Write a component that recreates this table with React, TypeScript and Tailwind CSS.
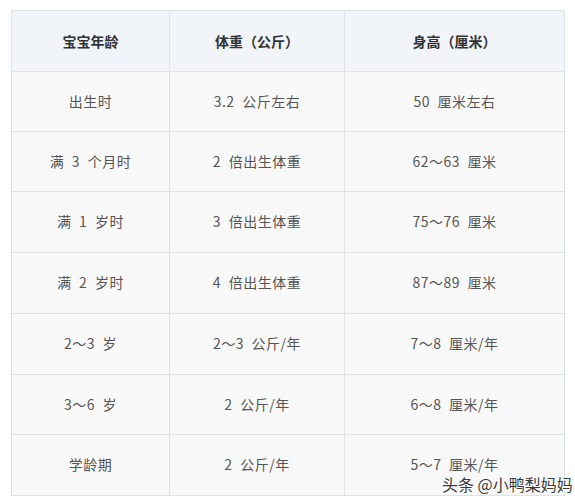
import React from "react";

const rows: { h: string; a: string; b: string; c: string }[] = [
  { h: "h-[60px]", a: "出生时", b: "3.2 公斤左右", c: "50 厘米左右" },
  { h: "h-[60px]", a: "满 3 个月时", b: "2 倍出生体重", c: "62～63 厘米" },
  { h: "h-[61px]", a: "满 1 岁时", b: "3 倍出生体重", c: "75～76 厘米" },
  { h: "h-[61px]", a: "满 2 岁时", b: "4 倍出生体重", c: "87～89 厘米" },
  { h: "h-[61px]", a: "2～3 岁", b: "2～3 公斤/年", c: "7～8 厘米/年" },
  { h: "h-[60px]", a: "3～6 岁", b: "2 公斤/年", c: "6～8 厘米/年" },
  { h: "h-[61px]", a: "学龄期", b: "2 公斤/年", c: "5～7 厘米/年" },
];

const cell =
  "flex items-center justify-center border-r border-b border-[#dfe3e8] whitespace-pre";

export default function App() {
  return (
    <div
      className="relative w-[575px] h-[504px] bg-white pt-[10px] pl-[11px]"
      style={{ fontFamily: '"Noto Sans CJK SC", "Noto Sans", sans-serif' }}
    >
      <div className="w-[553px] border-l border-t border-[#dfe3e8] grid grid-cols-[158px_175px_220px]">
        <div className={`${cell} h-[61px] bg-[#f1f4f8] text-[14px] font-bold text-[#333]`}>宝宝年龄</div>
        <div className={`${cell} h-[61px] bg-[#f1f4f8] text-[14px] font-bold text-[#333]`}>体重（公斤）</div>
        <div className={`${cell} h-[61px] bg-[#f1f4f8] text-[14px] font-bold text-[#333]`}>身高（厘米）</div>
        {rows.map((r, i) => (
          <React.Fragment key={i}>
            <div className={`${cell} ${r.h} bg-[#faf9f9] text-[14px] text-[#555] tracking-[0.5px] [word-spacing:4px] pb-[1px]`}>{r.a}</div>
            <div className={`${cell} ${r.h} bg-[#faf9f9] text-[14px] text-[#555] tracking-[0.5px] [word-spacing:4px] pb-[1px]`}>{r.b}</div>
            <div className={`${cell} ${r.h} bg-[#faf9f9] text-[14px] text-[#555] tracking-[0.5px] [word-spacing:4px] pb-[1px]`}>{r.c}</div>
          </React.Fragment>
        ))}
      </div>
      <div className="absolute left-[442px] top-[474px] text-[16px] leading-[20px] text-[#3a3a3a] [text-shadow:0_0_2px_#fff,0_0_2px_#fff,0_0_2px_#fff]">
        头条 @小鸭梨妈妈
      </div>
    </div>
  );
}
